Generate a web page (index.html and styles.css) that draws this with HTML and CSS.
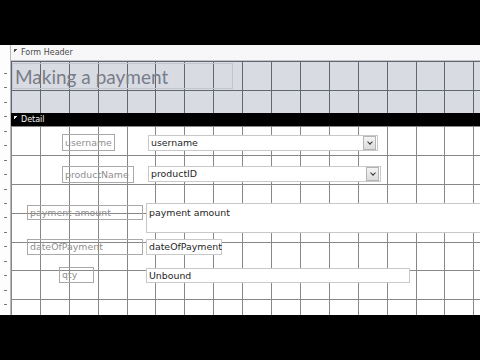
FILE: index.html
```html
<!DOCTYPE html>
<html lang="en">
<head>
    <meta charset="UTF-8">
    <title>Making a payment - Design View</title>
    <link rel="stylesheet" href="styles.css">
</head>
<body>
    <div class="letterbox"></div>

    <div class="designer">
        <div class="ruler"></div>

        <div class="form">
            <div class="band band-light"><span class="band-icon"></span>Form Header</div>

            <div class="section section-header">
                <div class="ctl title">Making a payment</div>
            </div>

            <div class="band band-dark"><span class="band-icon"></span>Detail</div>

            <div class="section section-detail">
                <div class="ctl label lbl-username">username</div>
                <div class="ctl combo combo-username">username<span class="drop"></span></div>

                <div class="ctl label lbl-product">productName</div>
                <div class="ctl combo combo-product">productID<span class="drop"></span></div>

                <div class="ctl label lbl-amount">payment amount</div>
                <div class="ctl textbox tb-amount">payment amount</div>

                <div class="ctl label lbl-date">dateOfPayment</div>
                <div class="ctl textbox tb-date">dateOfPayment</div>

                <div class="ctl label lbl-qty">qty</div>
                <div class="ctl textbox tb-qty">Unbound</div>
            </div>
        </div>
    </div>

    <div class="letterbox"></div>
</body>
</html>
```

FILE: styles.css
```css
:root {
    --grid-line: #62666e;
    --grid-step: 28.9px;
    --header-bg: #d9dbe3;
    --label-text: #8f8f8f;
    --label-border: #a9a9a9;
    --field-border: #c9c9c9;
    --field-text: #262626;
}

body {
    margin: 0;
    width: 480px;
    height: 360px;
    background: #000;
    font-family: "DejaVu Sans", Verdana, sans-serif;
    overflow: hidden;
}

.letterbox {
    height: 45px;
    background: #000;
}

.designer {
    display: flex;
    height: 270px;
    background: #fff;
}

/* vertical ruler on the left */
.ruler {
    width: 10px;
    flex-shrink: 0;
    border-right: 1px solid #b8b8b8;
    background-color: #fdfdfd;
    background-image: repeating-linear-gradient(180deg, #777 0 1px, transparent 1px 14.45px);
    background-size: 3px 100%;
    background-position: 4px 28px;
    background-repeat: no-repeat;
}

.form {
    flex-grow: 1;
    display: flex;
    flex-direction: column;
    overflow: hidden;
}

.band {
    display: flex;
    align-items: center;
    gap: 2px;
    padding-left: 3px;
    font-size: 8px;
    flex-shrink: 0;
}

.band-light {
    height: 15px;
    background: #f7f7fa;
    border-bottom: 1px solid #c4c4cc;
    color: #4a4a4a;
}

.band-dark {
    height: 13px;
    background: #000;
    color: #f2f2f2;
}

/* small arrow in front of the band name */
.band-icon {
    width: 4px;
    height: 4px;
    background: linear-gradient(135deg, currentColor 50%, transparent 50%);
    margin-top: -3px;
    margin-right: 1px;
}

.section {
    position: relative;
    flex-shrink: 0;
    background-image:
        repeating-linear-gradient(90deg, var(--grid-line) 0 1px, transparent 1px var(--grid-step)),
        repeating-linear-gradient(180deg, var(--grid-line) 0 1px, transparent 1px var(--grid-step));
}

.section-header {
    height: 52px;
    background-color: var(--header-bg);
}

.section-detail {
    height: 189px;
    background-color: #fff;
    --grid-line: #888;
}

/* controls sit on the design canvas at their own coordinates */
.ctl {
    position: absolute;
    box-sizing: border-box;
    font-size: 9.4px;
    line-height: 1;
    white-space: nowrap;
    display: flex;
    align-items: center;
    padding-left: 2px;
}

.title {
    left: 1px;
    top: 2px;
    width: 221px;
    height: 26px;
    border: 1px solid #c2c5ce;
    font-family: Lato, "Open Sans", sans-serif;
    font-size: 19px;
    color: #787d89;
    padding-left: 2px;
    padding-top: 1px;
}

.label {
    border: 1px solid var(--label-border);
    color: var(--label-text);
}

.combo,
.textbox {
    background: #fff;
    border: 1px solid var(--field-border);
    color: var(--field-text);
}

.drop {
    position: absolute;
    right: 1px;
    top: 0;
    width: 13px;
    height: 14px;
    box-sizing: border-box;
    border: 1px solid #b4b4b4;
    background: linear-gradient(#f4f4f4, #dcdcdc);
}

.drop:before {
    content: "";
    position: absolute;
    left: 4px;
    top: 3px;
    width: 3px;
    height: 3px;
    border-right: 1.5px solid #333;
    border-bottom: 1.5px solid #333;
    transform: rotate(45deg);
}

.lbl-username { left: 51px; top: 8px; width: 53px; height: 17px; }
.combo-username { left: 137px; top: 9px; width: 230px; height: 16px; }

.lbl-product { left: 51px; top: 40px; width: 72px; height: 17px; }
.combo-product { left: 137px; top: 40px; width: 233px; height: 16px; }

.lbl-amount { left: 16px; top: 79px; width: 116px; height: 15px; }
.tb-amount {
    left: 135px;
    top: 77px;
    width: 360px;
    height: 30px;
    align-items: flex-start;
    padding-top: 4px;
}

.lbl-date { left: 16px; top: 113px; width: 116px; height: 16px; }
.tb-date { left: 135px; top: 113px; width: 76px; height: 16px; }

.lbl-qty { left: 48px; top: 141px; width: 35px; height: 16px; }
.tb-qty { left: 135px; top: 142px; width: 264px; height: 15px; }
```
